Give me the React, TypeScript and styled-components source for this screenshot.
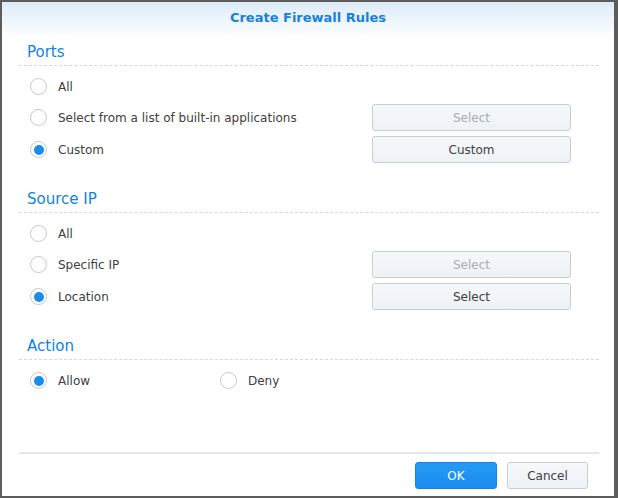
import styled, { createGlobalStyle } from "styled-components";

const GlobalStyle = createGlobalStyle`
  html, body {
    margin: 0;
    padding: 0;
    background: #ffffff;
  }
  * {
    box-sizing: border-box;
  }
`;

const Window = styled.div`
  width: 618px;
  height: 498px;
  display: flex;
  flex-direction: column;
  border: 2px solid #5c5c5c;
  border-right-width: 4px;
  background: #ffffff;
  font-family: "DejaVu Sans", Verdana, sans-serif;
  font-size: 12px;
  color: #404040;
`;

const Header = styled.div`
  height: 36px;
  flex-shrink: 0;
  display: flex;
  align-items: center;
  justify-content: center;
  padding-bottom: 5px;
  background: linear-gradient(to bottom, #dcebf8 0%, #f4f9fd 70%, #ffffff 100%);
`;

const Title = styled.h1`
  margin: 0;
  font-size: 13px;
  font-weight: bold;
  color: #1781da;
`;

const Body = styled.div`
  flex: 1;
  padding: 0 15px 0 17px;
`;

const Section = styled.section<{ $first?: boolean }>`
  margin-top: ${(p) => (p.$first ? "0" : "22px")};
`;

const Heading = styled.h2`
  margin: 0;
  height: 28px;
  padding-left: 8px;
  display: flex;
  align-items: center;
  font-size: 15px;
  font-weight: normal;
  color: #0d84e4;
  border-bottom: 1px dashed #d6d9dc;
`;

const Options = styled.div`
  display: flex;
  flex-direction: column;
  gap: 5px;
  padding-top: 8px;
`;

const Row = styled.div<{ $tall?: boolean }>`
  height: ${(p) => (p.$tall ? "27px" : "25px")};
  display: flex;
  align-items: center;
  padding-right: 28px;
`;

const Inline = styled.div`
  height: 25px;
  display: grid;
  grid-template-columns: 190px 1fr;
  align-items: center;
`;

const Choice = styled.label`
  flex: 1;
  display: flex;
  align-items: center;
  gap: 11px;
  padding-left: 11px;
  cursor: pointer;
`;

const Radio = styled.span<{ $checked?: boolean }>`
  width: 17px;
  height: 17px;
  border-radius: 50%;
  border: 1px solid #c3c8cd;
  background: #ffffff;
  display: flex;
  align-items: center;
  justify-content: center;
  flex-shrink: 0;
  &::after {
    content: "";
    width: 10px;
    height: 10px;
    border-radius: 50%;
    background: ${(p) => (p.$checked ? "#1a8cf0" : "transparent")};
  }
`;

const Button = styled.button<{ $disabled?: boolean }>`
  width: 199px;
  height: 27px;
  border: 1px solid #c9ced4;
  border-radius: 3px;
  background: linear-gradient(to bottom, #f5f8fb, #edf2f7);
  font-family: inherit;
  font-size: 12px;
  color: ${(p) => (p.$disabled ? "#a9adb2" : "#404040")};
  padding: 0;
`;

const Footer = styled.div`
  margin: 0 15px 0 17px;
  border-top: 2px solid #e4e6e8;
  height: 44px;
  flex-shrink: 0;
  display: flex;
  justify-content: flex-end;
  align-items: flex-start;
  gap: 10px;
  padding: 8px 11px 0 0;
`;

const FooterButton = styled.button<{ $primary?: boolean }>`
  width: ${(p) => (p.$primary ? "82px" : "81px")};
  height: 27px;
  border-radius: 3px;
  padding: 0;
  font-family: inherit;
  font-size: 12px;
  border: 1px solid ${(p) => (p.$primary ? "#1583e0" : "#c9ced4")};
  background: ${(p) =>
    p.$primary
      ? "linear-gradient(to bottom, #259af4, #1a8cef)"
      : "linear-gradient(to bottom, #f5f8fb, #edf2f7)"};
  color: ${(p) => (p.$primary ? "#ffffff" : "#404040")};
`;

interface IOption {
  label: string;
  checked?: boolean;
  button?: string;
  disabled?: boolean;
}

const ports: IOption[] = [
  { label: "All" },
  { label: "Select from a list of built-in applications", button: "Select", disabled: true },
  { label: "Custom", checked: true, button: "Custom" },
];

const sources: IOption[] = [
  { label: "All" },
  { label: "Specific IP", button: "Select", disabled: true },
  { label: "Location", checked: true, button: "Select" },
];

function OptionRow({ label, checked, button, disabled }: IOption) {
  return (
    <Row $tall={Boolean(button)}>
      <Choice>
        <Radio $checked={checked} />
        {label}
      </Choice>
      {button && <Button $disabled={disabled}>{button}</Button>}
    </Row>
  );
}

function App() {
  return (
    <>
      <GlobalStyle />
      <Window>
        <Header>
          <Title>Create Firewall Rules</Title>
        </Header>
        <Body>
          <Section $first>
            <Heading>Ports</Heading>
            <Options>
              {ports.map((o) => (
                <OptionRow key={o.label} {...o} />
              ))}
            </Options>
          </Section>
          <Section>
            <Heading>Source IP</Heading>
            <Options>
              {sources.map((o) => (
                <OptionRow key={o.label} {...o} />
              ))}
            </Options>
          </Section>
          <Section>
            <Heading>Action</Heading>
            <Options>
              <Inline>
                <Choice>
                  <Radio $checked />
                  Allow
                </Choice>
                <Choice>
                  <Radio />
                  Deny
                </Choice>
              </Inline>
            </Options>
          </Section>
        </Body>
        <Footer>
          <FooterButton $primary>OK</FooterButton>
          <FooterButton>Cancel</FooterButton>
        </Footer>
      </Window>
    </>
  );
}

export default App;
